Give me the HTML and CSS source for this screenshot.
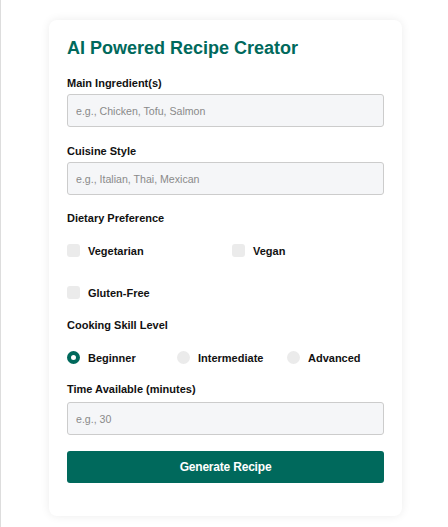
FILE: index.html
```html
<!doctype html>
<html>
<head>
<meta charset="utf-8">
<link rel="stylesheet" href="styles.css">
</head>
<body>
<div class="card">
	<h1 class="title">AI Powered Recipe Creator</h1>

	<div class="field">
		<label class="lbl" for="ingredient">Main Ingredient(s)</label>
		<input class="txt" id="ingredient" type="text" placeholder="e.g., Chicken, Tofu, Salmon">
	</div>

	<div class="field field-cuisine">
		<label class="lbl" for="cuisine">Cuisine Style</label>
		<input class="txt" id="cuisine" type="text" placeholder="e.g., Italian, Thai, Mexican">
	</div>

	<div class="field field-checks">
		<div class="lbl">Dietary Preference</div>
		<div class="checks">
			<label class="opt"><span class="box"></span>Vegetarian</label>
			<label class="opt"><span class="box"></span>Vegan</label>
			<label class="opt"><span class="box"></span>Gluten-Free</label>
		</div>
	</div>

	<div class="field field-radios">
		<div class="lbl">Cooking Skill Level</div>
		<div class="radios">
			<label class="opt"><span class="dot on"></span>Beginner</label>
			<label class="opt"><span class="dot"></span>Intermediate</label>
			<label class="opt"><span class="dot"></span>Advanced</label>
		</div>
	</div>

	<div class="field field-time">
		<label class="lbl lbl-time" for="time">Time Available (minutes)</label>
		<input class="txt" id="time" type="text" placeholder="e.g., 30">
	</div>

	<button class="btn" type="button">Generate Recipe</button>
</div>
</body>
</html>
```

FILE: styles.css
```css
*{
	margin:0; padding:0; box-sizing:border-box;
}
body{
	background:#fff; border-left:1px solid #ddd;
	min-height:527px; font-family:"Liberation Sans", Arial, sans-serif;
	padding-top:20px;
}
.card{
	width:353px; margin-left:48px; background:#fff;
	border-radius:8px; padding:17px 18px 33px;
	box-shadow:0 0 10px rgba(0,0,0,0.08);
}
.title{
	font-size:18px; line-height:22px; font-weight:bold;
	color:#00695c; margin-bottom:17px;
}
.field{
	margin-bottom:17px;
}
	.lbl{
		display:block; font-size:11px; line-height:14px;
		font-weight:bold; color:#111; margin-bottom:4px;
	}
	.lbl-time{ margin-bottom:6px; }
	.txt{
		display:block; width:100%; height:33px;
		background:#f5f6f8; border:1px solid #ccc; border-radius:3px;
		padding:0 8px; font-family:"Liberation Sans", Arial, sans-serif;
		font-size:10.6px; color:#333; outline:none;
	}
	.txt::placeholder{ color:#8a8a8a; }

.field-cuisine{ margin-bottom:16px; }
.field-checks{ margin-bottom:19px; }
.field-radios{ margin-bottom:18px; }
.field-time{ margin-bottom:16px; }
.checks{
	display:grid; grid-template-columns:165px 1fr;
	row-gap:29px; padding-top:15px;
}
.radios{
	display:grid; grid-template-columns:110px 110px 1fr;
	padding-top:15px;
}
.opt{
	display:flex; align-items:center; height:13px;
	font-size:11px; font-weight:bold; color:#111;
}
	.box{
		width:13px; height:13px; border-radius:3px;
		background:#ebebeb; margin-right:8px;
	}
	.dot{
		width:13px; height:13px; border-radius:50%;
		background:#ebebeb; margin-right:8px;
	}
	.dot.on{
		background:#fff; border:4px solid #00695c;
	}
.btn{
	display:block; width:100%; height:32px; border:none;
	border-radius:3px; background:#00695c; color:#fff;
	font-family:"Liberation Sans", Arial, sans-serif;
	font-size:12px; font-weight:bold; letter-spacing:-0.2px;
}
```
